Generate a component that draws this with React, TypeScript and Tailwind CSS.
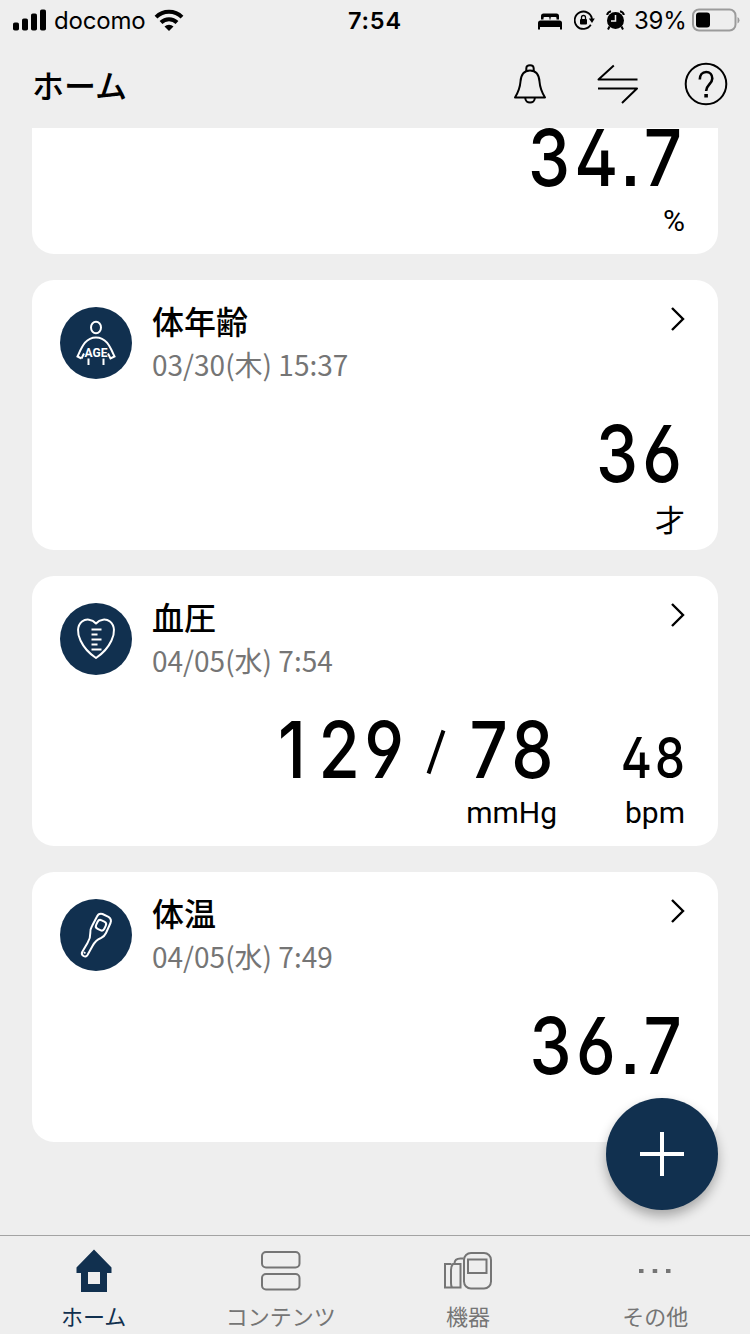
import type { ReactNode } from "react";

type Lectura = {
  id: string;
  titulo: string;
  fecha: string;
  icono: ReactNode;
  valor: ReactNode;
};

/** Cifra grande, condensada, alineada a la derecha de su caja. */
function Cifra({ children, small = false }: { children: ReactNode; small?: boolean }) {
  return (
    <span
      className={`inline-block origin-right scale-x-[0.85] whitespace-nowrap font-['Inter',sans-serif] leading-none [font-feature-settings:'cv02','cv03','cv04','ss07'] ${
        small ? "-mr-[3px] text-[56px] tracking-[3.5px] font-[450]" : "-mr-px text-[79px] tracking-[5px] font-[460]"
      }`}
    >
      {children}
    </span>
  );
}

function Unidad({ children }: { children: string }) {
  // Las unidades en kanji se asientan un poco más abajo que las latinas
  return (
    <span
      className={`h-8 text-[30px] leading-8 font-['Roboto','Noto_Sans_CJK_JP',sans-serif] ${children === "才" ? "mt-[12px]" : "mt-[8px]"}`}
    >
      {children}
    </span>
  );
}

/** Valor simple: número arriba y unidad debajo. */
function ValorSimple({ valor, unidad }: { valor: string; unidad?: string }) {
  return (
    <div className="flex flex-col items-end">
      <div className="flex h-[78px] items-end justify-end">
        <Cifra>{valor}</Cifra>
      </div>
      {unidad && <Unidad>{unidad}</Unidad>}
    </div>
  );
}

function ValorPresion() {
  return (
    <div className="flex justify-end">
      <div className="flex flex-col items-end">
        <div className="flex h-[78px] items-end justify-end">
          <Cifra>
            <span className="mr-[10px]">1</span>29
          </Cifra>
          <svg className="mb-[13px] ml-[19px] mr-[7px] h-12 w-5" viewBox="0 0 20 48" fill="none">
            <path d="M2.5 45.5 17.5 2.5" stroke="#000" strokeWidth="4" />
          </svg>
          <div className="flex w-[104px] justify-end">
            <Cifra>78</Cifra>
          </div>
        </div>
        <Unidad>mmHg</Unidad>
      </div>
      <div className="flex w-32 flex-col items-end">
        <div className="flex h-[78px] items-end justify-end pb-[3px]">
          <Cifra small>48</Cifra>
        </div>
        <Unidad>bpm</Unidad>
      </div>
    </div>
  );
}

function IconoEdad() {
  return (
    <svg className="size-[72px]" viewBox="0 0 72 72" fill="none" stroke="#fff" strokeWidth="2">
      <ellipse cx="36" cy="20.5" rx="5" ry="5.800" />
      <path d="m21.500 51.500-4-2C21.500 41 25 30.500 36 30.500s14.500 10.500 18.500 19l-4 2-2.500-5" />
      <path d="m21.500 51.500 2.500-5M28.500 51.500v6.500M43.500 51.500v6.500" />
      <text x="36" y="49.500" textAnchor="middle" fill="#fff" stroke="none" className="font-['Roboto',sans-serif] text-[12px] font-bold">
        AGE
      </text>
    </svg>
  );
}

function IconoPresion() {
  return (
    <svg className="size-[72px]" viewBox="0 0 72 72" fill="none" stroke="#fff" strokeWidth="2">
      <path d="M36 20.500C32 16 26 15.500 22 18.500c-5 4-5 12-1.500 19C24 45 30 51 36 55c6-4 12-10 15.500-17.500 3.500-7 3.500-15-1.500-19-4-3-10-2.500-14 2Z" strokeLinejoin="round" />
      <path d="M31.500 26.500h10M31.500 31.500h6M31.500 36.500h10M31.500 41.500h6M31.500 46.500h10" />
    </svg>
  );
}

function IconoTermometro() {
  return (
    <svg className="size-[72px]" viewBox="0 0 72 72" fill="none" stroke="#fff" strokeWidth="2" strokeLinejoin="round">
      <path d="M37 17.500 Q38.500 14 42.500 15 L48.500 17.800 Q52 20 50.500 24 L46 34 Q44.500 37.500 40.500 39.300 C36 41 34.500 43.500 32.500 47 L27.500 56 Q26 58.500 23.500 57 Q21 55.500 22.200 53 L27.500 44 C30 40 30.500 37.500 30.300 34 Q30 30.500 32 27 Z" />
      <rect x="36.500" y="21.500" width="9" height="9.500" rx="3" transform="rotate(25 41 26.200)" />
      <path d="m25 53-.8 1.500" />
    </svg>
  );
}

const lecturas: Lectura[] = [
  { id: "grasa", titulo: "", fecha: "", icono: null, valor: <ValorSimple valor="34.7" unidad="%" /> },
  { id: "edad", titulo: "体年齢", fecha: "03/30(木) 15:37", icono: <IconoEdad />, valor: <ValorSimple valor="36" unidad="才" /> },
  { id: "presion", titulo: "血圧", fecha: "04/05(水) 7:54", icono: <IconoPresion />, valor: <ValorPresion /> },
  { id: "temp", titulo: "体温", fecha: "04/05(水) 7:49", icono: <IconoTermometro />, valor: <ValorSimple valor="36.7" /> },
];

function Tarjeta({ lectura }: { lectura: Lectura }) {
  return (
    <section className="h-[270px] shrink-0 rounded-[22px] bg-white pl-7 pr-[33px] pt-[27px]">
      <div className="flex h-[108px]">
        <div className="size-[72px] rounded-full bg-[#11304f]">{lectura.icono}</div>
        <div className="ml-5 flex-1">
          <h2 className="-mt-[5px] h-9 text-[32px] font-medium leading-9">{lectura.titulo}</h2>
          <p className="mt-2 h-9 text-[28px] leading-9 text-[#757575]">{lectura.fecha}</p>
        </div>
        <svg className="h-6 w-4" viewBox="0 0 16 24" fill="none" stroke="#000" strokeWidth="2.400">
          <path d="m3 1 11 11-11 11" />
        </svg>
      </div>
      {lectura.valor}
    </section>
  );
}

function BarraEstado() {
  return (
    <div className="flex h-10 shrink-0 items-center pl-[13px] pr-[10px] font-['Inter',sans-serif]">
      <div className="flex w-[335px] items-center">
        <svg className="h-[22px] w-[33px]" viewBox="0 0 33 22">
          <rect x="0" y="13.500" width="6" height="8" rx="1.800" />
          <rect x="9" y="9.500" width="6" height="12" rx="1.800" />
          <rect x="18" y="4.500" width="6" height="17" rx="1.800" />
          <rect x="27" y="0.500" width="6" height="21" rx="1.800" />
        </svg>
        <span className="ml-2 w-[92px] pt-0.5 text-[24px] tracking-[-0.200px]">docomo</span>
        <svg className="ml-2 h-[22px] w-[30px]" viewBox="0 0 30 22" fill="none" stroke="#000" strokeWidth="4">
          <path d="M2 8.200a18.500 18.500 0 0 1 26 0M7 13.500a11.500 11.500 0 0 1 16 0" />
          <path d="M15 22l-4.500-4.500a6.500 6.500 0 0 1 9 0Z" fill="#000" stroke="none" />
        </svg>
      </div>
      <span className="pt-0.5 text-[23.500px] font-semibold tracking-[0.800px]">7:54</span>
      <div className="ml-auto flex items-center">
        <svg className="mt-0.5 h-[17px] w-6" viewBox="0 0 24 17">
          <path d="M3 6.500V3Q3 .5 5.500.5h13Q21 .5 21 3v3.500h-2.500V5Q18.500 4 17.500 4h-4Q12.500 4 12.500 5v1.500h-1V5Q11.500 4 10.500 4h-4Q5.500 4 5.500 5v1.500ZM0 16.500V10Q0 7.500 2.500 7.500h19Q24 7.500 24 10v6.500h-2V14H2v2.500Z" />
        </svg>
        <svg className="ml-3 h-5 w-[21px]" viewBox="0 0 21 20" fill="none" stroke="#000">
          <path d="M16.800 14.800A8.700 8.700 0 1 1 18 9" strokeWidth="1.800" />
          <path d="M14.800 8.500h6L18 13Z" fill="#000" stroke="none" />
          <rect x="6" y="9" width="7" height="5.500" rx="1" fill="#000" stroke="none" />
          <path d="M7.500 9.500V7.500a2 2 0 0 1 4 0v2" strokeWidth="1.300" />
        </svg>
        <svg className="ml-[11px] h-5 w-[19px]" viewBox="0 0 19 20">
          <circle cx="9.500" cy="10.500" r="8.500" />
          <path d="m3.500 16.500-1.500 3M15.500 16.500l1.500 3M1.200 5Q1.500 2 5 1.200M17.800 5Q17.500 2 14 1.200" stroke="#000" strokeWidth="2" fill="none" />
          <path d="M9.500 5v6H5" stroke="#eee" strokeWidth="1.500" fill="none" />
        </svg>
        <span className="ml-[9px] w-[54px] whitespace-nowrap pt-0.5 text-[24px] tracking-[-0.200px]">39%</span>
        <svg className="ml-[4px] h-6 w-12" viewBox="0 0 48 24">
          <rect x="1" y="1.500" width="42.500" height="21" rx="6" fill="none" stroke="#9b9b9b" strokeWidth="2" />
          <rect x="4" y="4.500" width="14" height="15" rx="3" />
          <path d="M45.500 9v6.500q2-1 2-3.200t-2-3.300" fill="#9b9b9b" />
        </svg>
      </div>
    </div>
  );
}

function Cabecera() {
  return (
    <header className="flex h-[88px] shrink-0 items-center pl-8 pr-[22px]">
      <h1 className="flex-1 text-[32px] font-medium leading-none">ホーム</h1>
      <svg className="size-11" viewBox="0 0 44 44" fill="none" stroke="#000" strokeWidth="2">
        <path d="M7 35.500C11 29 12 26 12.500 19.500c.5-7 3.500-11 9.500-11s9 4 9.500 11c.5 6.500 1.500 9.500 5.500 16Z" strokeLinejoin="round" />
        <path d="M18.300 9V6.500q0-3.300 3.700-3.300t3.700 3.300V9M17.300 36c0 6 9.500 6 9.500 0" />
      </svg>
      <svg className="ml-11 size-11" viewBox="0 0 44 44" fill="none" stroke="#000" strokeWidth="2" strokeLinejoin="round">
        <path d="M17.800 3.500 2.500 17.500h39M2 26.500h39L26 41" />
      </svg>
      <svg className="ml-11 size-11" viewBox="0 0 44 44" fill="none" stroke="#000" strokeWidth="2">
        <circle cx="22" cy="22" r="20.300" />
        <path d="M15.800 17.500c0-4.500 2.500-7.500 6.300-7.500s6.200 3 6.200 6.500c0 5.500-6.200 6.500-6.200 12.500" strokeWidth="2.600" />
        <path d="M20.300 32h3.600v3.500h-3.600Z" fill="#000" stroke="none" />
      </svg>
    </header>
  );
}

const tabs = [
  {
    nombre: "ホーム",
    icono: (
      <path d="M24 2.500 41.500 20.500v5.500H37V45H11V26H6.500V20.500ZM18 25v12h12V25Z" fill="currentColor" fillRule="evenodd" stroke="none" />
    ),
  },
  {
    nombre: "コンテンツ",
    icono: (
      <>
        <rect x="5" y="5" width="37.500" height="15.500" rx="4" />
        <rect x="5" y="27" width="37.500" height="15.500" rx="4" />
      </>
    ),
  },
  {
    nombre: "機器",
    icono: (
      <>
        <rect x="20" y="6" width="27" height="35.500" rx="7" />
        <path d="M24 12.500h18.500v13.500H24ZM19.500 11.500h-3q-6 0-6 5M7.500 17H1v23.500h15.500V17H9Q7 19 7 23v13q0 3 1 4.500" />
      </>
    ),
  },
  { nombre: "その他", icono: <path d="M8 22h4.500v4H8ZM21.700 22h4.500v4h-4.500ZM35 22h4.500v4H35Z" fill="currentColor" stroke="none" /> },
];

export default function App() {
  return (
    <div className="relative flex h-[1334px] w-[750px] flex-col overflow-hidden bg-[#eeeeee] text-black font-['Noto_Sans_CJK_JP',sans-serif]">
      <BarraEstado />
      <Cabecera />

      <main className="min-h-0 flex-1 overflow-hidden px-8">
        {/* La lista aparece desplazada: la primera tarjeta queda cortada por la cabecera */}
        <div className="-mt-36 flex flex-col gap-[26px]">
          {lecturas.map((l) => (
            <Tarjeta key={l.id} lectura={l} />
          ))}
        </div>
      </main>

      {/* Botón flotante de añadir */}
      <button className="absolute bottom-[124px] right-8 flex size-28 items-center justify-center rounded-full bg-[#11304f] shadow-[0_6px_12px_rgba(0,0,0,0.3)]" aria-label="追加">
        <svg className="size-11" viewBox="0 0 44 44" stroke="#fff" strokeWidth="4">
          <path d="M22 0v44M0 22h44" />
        </svg>
      </button>

      <nav className="flex h-[99px] shrink-0 border-t border-[#a3a3a3] pr-px">
        {tabs.map((t, i) => (
          <div key={t.nombre} className={`flex flex-1 flex-col items-center pt-[11px] ${i === 0 ? "text-[#11304f]" : "text-[#757575]"}`}>
            <svg className="size-12 shrink-0" viewBox="0 0 48 48" fill="none" stroke="currentColor" strokeWidth="2">
              {t.icono}
            </svg>
            <span className="mt-1.5 text-[22px] leading-7">{t.nombre}</span>
          </div>
        ))}
      </nav>
    </div>
  );
}
